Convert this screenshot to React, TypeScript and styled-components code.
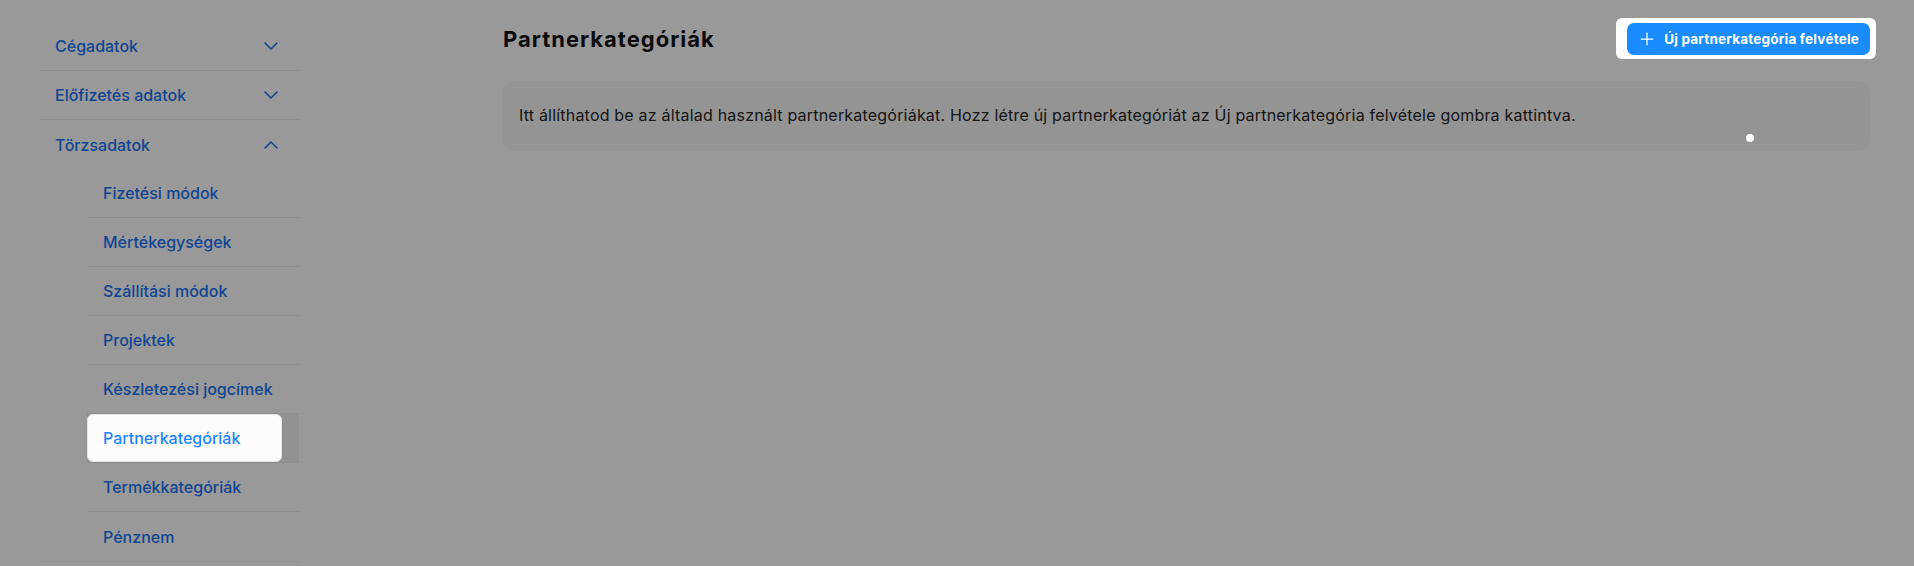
import styled, { createGlobalStyle } from "styled-components";
import { ChevronDown, ChevronUp, Plus } from "lucide-react";

const GlobalStyle = createGlobalStyle`
  html, body {
    margin: 0;
    padding: 0;
    background: #ffffff;
    overflow: hidden;
  }
  body {
    font-family: Inter, "Noto Sans", "Liberation Sans", sans-serif;
  }
  * {
    box-sizing: border-box;
  }
`;

const topItems = [
  { label: "Cégadatok", open: false },
  { label: "Előfizetés adatok", open: false },
];

const subItems = [
  "Fizetési módok",
  "Mértékegységek",
  "Szállítási módok",
  "Projektek",
  "Készletezési jogcímek",
  "Partnerkategóriák",
  "Termékkategóriák",
  "Pénznem",
];

const ACTIVE = "Partnerkategóriák";

const App = () => {
  return (
    <>
      <GlobalStyle />
      <StyledPage>
        <StyledSidebar>
          {topItems.map((item) => (
            <StyledGroupRow key={item.label}>
              <span>{item.label}</span>
              <ChevronDown size={24} strokeWidth={1.6} />
            </StyledGroupRow>
          ))}
          <StyledGroup>
            <StyledGroupRow $open>
              <span>Törzsadatok</span>
              <ChevronUp size={24} strokeWidth={1.6} />
            </StyledGroupRow>
            {subItems.map((label, i) => (
              <StyledSubRow
                key={label}
                $active={label === ACTIVE}
                $last={i === subItems.length - 1}
              >
                <StyledSubLink $active={label === ACTIVE}>{label}</StyledSubLink>
              </StyledSubRow>
            ))}
          </StyledGroup>
        </StyledSidebar>

        <StyledMain>
          <StyledHeaderRow>
            <StyledTitle>Partnerkategóriák</StyledTitle>
            <StyledSpot>
              <StyledPrimaryButton>
                <Plus size={20} strokeWidth={1.5} />
                Új partnerkategória felvétele
              </StyledPrimaryButton>
            </StyledSpot>
          </StyledHeaderRow>
          <StyledInfoBox>
            Itt állíthatod be az általad használt partnerkategóriákat. Hozz létre új
            partnerkategóriát az Új partnerkategória felvétele gombra kattintva.
            <StyledBeacon />
          </StyledInfoBox>
        </StyledMain>
      </StyledPage>
      <StyledOverlay />
    </>
  );
};

const StyledPage = styled.div`
  display: flex;
  align-items: flex-start;
  min-height: 566px;
`;

const StyledSidebar = styled.nav`
  width: 260px;
  margin: 22px 0 0 39px;
  flex-shrink: 0;
`;

const StyledGroup = styled.div`
  border-bottom: 1px solid #ebebeb;
`;

const StyledGroupRow = styled.div<{ $open?: boolean }>`
  display: flex;
  align-items: center;
  justify-content: space-between;
  height: 49px;
  padding: 0 16px;
  border-bottom: ${(p) => (p.$open ? "none" : "1px solid #ebebeb")};
  color: #1b74f5;
  font-size: 16px;
  font-weight: 500;
  cursor: pointer;
`;

const StyledSubRow = styled.div<{ $active?: boolean; $last?: boolean }>`
  display: flex;
  align-items: stretch;
  height: 49px;
  margin-left: 48px;
  background: ${(p) => (p.$active ? "#f2f2f2" : "transparent")};
  border-bottom: ${(p) => (p.$last ? "none" : "1px solid #ebebeb")};
`;

const StyledSubLink = styled.a<{ $active?: boolean }>`
  display: flex;
  align-items: center;
  padding: 0 16px;
  width: ${(p) => (p.$active ? "195px" : "auto")};
  color: ${(p) => (p.$active ? "#1a84ff" : "#1b74f5")};
  font-size: 16px;
  font-weight: 500;
  cursor: pointer;
  ${(p) =>
    p.$active &&
    `
    position: relative;
    z-index: 101;
    background: #fcfcfc;
    border-radius: 6px;
    border: 1px solid #e4e4e4;
    padding-left: 15px;
  `}
`;

const StyledMain = styled.main`
  flex: 1;
  margin: 23px 44px 0 204px;
`;

const StyledHeaderRow = styled.div`
  display: flex;
  align-items: center;
  justify-content: space-between;
  height: 32px;
`;

const StyledTitle = styled.h1`
  margin: 0;
  font-size: 22px;
  font-weight: 700;
  letter-spacing: 1px;
  color: #111111;
`;

const StyledSpot = styled.div`
  position: relative;
  z-index: 101;
  background: #ffffff;
  border-radius: 6px;
  padding: 5px 6px 4px 11px;
  margin: -5px -6px -4px -11px;
`;

const StyledPrimaryButton = styled.button`
  display: flex;
  align-items: center;
  gap: 7px;
  height: 32px;
  padding: 0 11px 0 10px;
  border: none;
  border-radius: 7px;
  background: #1a8cff;
  color: #ffffff;
  font-family: Inter, "Noto Sans", sans-serif;
  font-size: 13.5px;
  font-weight: 700;
  letter-spacing: 0.2px;
  cursor: pointer;
`;

const StyledInfoBox = styled.div`
  position: relative;
  margin-top: 26px;
  padding: 23px 16px 25px;
  border-radius: 12px;
  background: #f7f7f7;
  color: #262626;
  font-size: 16px;
  letter-spacing: 0.2px;
  line-height: 22px;
`;

const StyledBeacon = styled.span`
  position: absolute;
  right: 116px;
  top: 53px;
  width: 8px;
  height: 8px;
  border-radius: 50%;
  background: #ffffff;
  z-index: 101;
`;

const StyledOverlay = styled.div`
  position: fixed;
  inset: 0;
  background: rgba(0, 0, 0, 0.4);
  z-index: 100;
  pointer-events: none;
`;

export default App;
